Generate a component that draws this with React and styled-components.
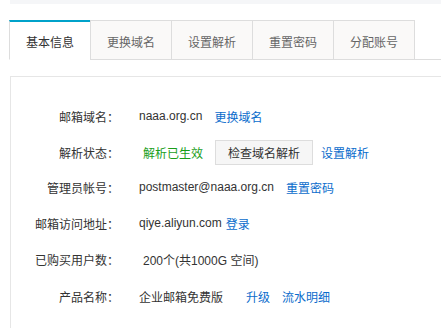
import React from "react";
import styled, { createGlobalStyle } from "styled-components";

const GlobalStyle = createGlobalStyle`
  body {
    margin: 0;
    background: #fff;
    font-family: "Liberation Sans", "Noto Sans CJK SC", sans-serif;
    font-size: 12px;
    color: #333;
  }
`;

const Page = styled.div`
  padding-left: 10px;
  width: 431px;
  height: 328px;
  overflow: hidden;
`;

const TopBand = styled.div`
  height: 4px;
  background: #f5f6f8;
`;

const TabBar = styled.div`
  display: flex;
  margin: 16px 0 0 -1px;
  border-bottom: 1px solid #dddddd;
`;

const Tab = styled.div`
  box-sizing: border-box;
  width: ${(p) => (p.last ? 82 : 81)}px;
  height: 40px;
  margin-bottom: -1px;
  display: flex;
  align-items: center;
  justify-content: center;
  padding-top: 2px;
  border: 1px solid #dddddd;
  border-right: ${(p) => (p.last ? "1px solid #dddddd" : "none")};
  border-top: ${(p) => (p.active ? "2px solid #00a2ca" : "1px solid #dddddd")};
  border-bottom-color: ${(p) => (p.active ? "#fff" : "#dddddd")};
  background: ${(p) => (p.active ? "#fff" : "#faf9f8")};
  color: ${(p) => (p.active ? "#333" : "#666")};
  font-size: 12px;
`;

const Panel = styled.div`
  margin-top: 16px;
  border-top: 1px solid #e6e6e6;
  border-left: 1px solid #e6e6e6;
  padding-top: 27px;
  height: 300px;
  display: flex;
  flex-direction: column;
  gap: 12px;
`;

const Row = styled.div`
  display: flex;
  align-items: center;
  height: 24px;
  margin-top: ${(p) => p.shift || 0}px;
`;

const Label = styled.div`
  width: 108px;
  text-align: right;
  color: #333;
  white-space: nowrap;
`;

const Value = styled.span`
  margin-left: ${(p) => 20 + (p.indent || 0)}px;
  color: #333;
  white-space: nowrap;
`;

const Status = styled.span`
  margin-left: 24px;
  color: #1a9e1a;
  white-space: nowrap;
`;

const Link = styled.a`
  margin-left: ${(p) => p.gap ?? 12}px;
  color: #0a6ccc;
  text-decoration: none;
  white-space: nowrap;
  cursor: pointer;
`;

const Button = styled.button`
  box-sizing: border-box;
  margin-left: 12px;
  height: 25px;
  padding: 0 12px;
  border: 1px solid #dddddd;
  background: #f6f6f6;
  color: #333;
  font-family: inherit;
  font-size: 12px;
  border-radius: 0;
`;

const tabs = ["基本信息", "更换域名", "设置解析", "重置密码", "分配账号"];

export default function App() {
  return (
    <>
      <GlobalStyle />
      <Page>
        <TopBand />
        <TabBar>
          {tabs.map((t, i) => (
            <Tab key={t} active={i === 0} last={i === tabs.length - 1}>
              {t}
            </Tab>
          ))}
        </TabBar>
        <Panel>
          <Row>
            <Label>邮箱域名：</Label>
            <Value>naaa.org.cn</Value>
            <Link>更换域名</Link>
          </Row>
          <Row>
            <Label>解析状态：</Label>
            <Status>解析已生效</Status>
            <Button>检查域名解析</Button>
            <Link gap={8}>设置解析</Link>
          </Row>
          <Row shift={-1}>
            <Label>管理员帐号：</Label>
            <Value>postmaster@naaa.org.cn</Value>
            <Link>重置密码</Link>
          </Row>
          <Row>
            <Label>邮箱访问地址：</Label>
            <Value>qiye.aliyun.com</Value>
            <Link gap={4}>登录</Link>
          </Row>
          <Row>
            <Label>已购买用户数：</Label>
            <Value indent={4}>200个(共1000G 空间)</Value>
          </Row>
          <Row shift={1}>
            <Label>产品名称：</Label>
            <Value>企业邮箱免费版</Value>
            <Link gap={23}>升级</Link>
            <Link>流水明细</Link>
          </Row>
        </Panel>
      </Page>
    </>
  );
}
